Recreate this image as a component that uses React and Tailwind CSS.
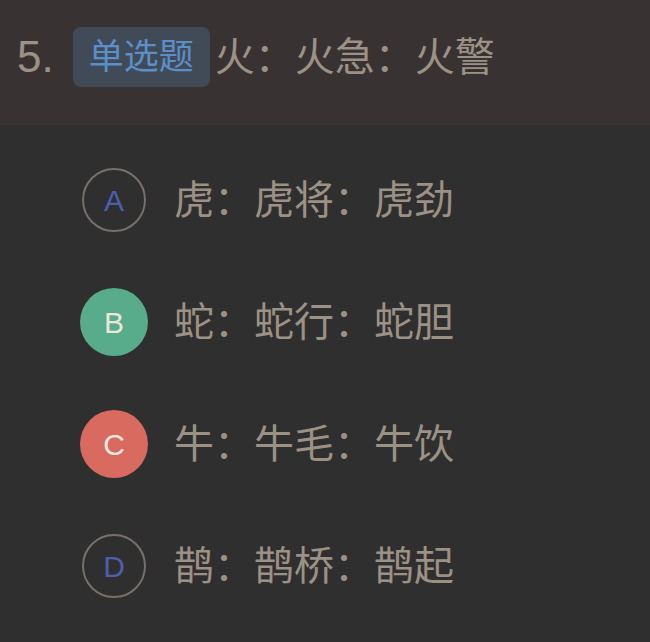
import React from "react";

const options = [
  { key: "A", text: "虎：虎将：虎劲", state: "idle" },
  { key: "B", text: "蛇：蛇行：蛇胆", state: "right" },
  { key: "C", text: "牛：牛毛：牛饮", state: "wrong" },
  { key: "D", text: "鹊：鹊桥：鹊起", state: "idle" },
];

const OptionBadge = ({ label, state }) => {
  if (state === "right") {
    return (
      <div className="w-[68px] h-[68px] rounded-full bg-[#58ab8b] flex items-center justify-center text-[30px] text-[#ece6d6]">
        {label}
      </div>
    );
  }
  if (state === "wrong") {
    return (
      <div className="w-[68px] h-[68px] rounded-full bg-[#d96a60] flex items-center justify-center text-[30px] text-[#f3e9df]">
        {label}
      </div>
    );
  }
  return (
    <div className="w-[68px] h-[68px] flex items-center justify-center">
      <div className="w-[64px] h-[64px] rounded-full border-2 border-[#77706a] flex items-center justify-center text-[30px] text-[#4a60ad]">
        {label}
      </div>
    </div>
  );
};

export default function App() {
  return (
    <div
      className="w-[650px] h-[642px] bg-[#2f2f2f] overflow-hidden"
      style={{ fontFamily: '"Liberation Sans", "Noto Sans CJK SC", sans-serif' }}
    >
      {/* Question header */}
      <div className="h-[125px] bg-[#383332] flex items-center pl-[17px] pb-[11px]">
        <span className="text-[44px] leading-none text-[#9b9184] mr-[19px]">5.</span>
        <span className="h-[60px] px-[16px] rounded-[8px] bg-[#414a57] flex items-center text-[35px] text-[#5b8fc9]">
          单选题
        </span>
        <span className="ml-[5px] text-[40px] leading-none text-[#9b9184]">火：火急：火警</span>
      </div>

      {/* Options */}
      <div className="flex flex-col gap-[54px] pt-[41px] pl-[80px]">
        {options.map((o) => (
          <div key={o.key} className="h-[68px] flex items-center gap-[26px]">
            <OptionBadge label={o.key} state={o.state} />
            <span className="text-[40px] leading-none text-[#9b9184]">{o.text}</span>
          </div>
        ))}
      </div>
    </div>
  );
}
